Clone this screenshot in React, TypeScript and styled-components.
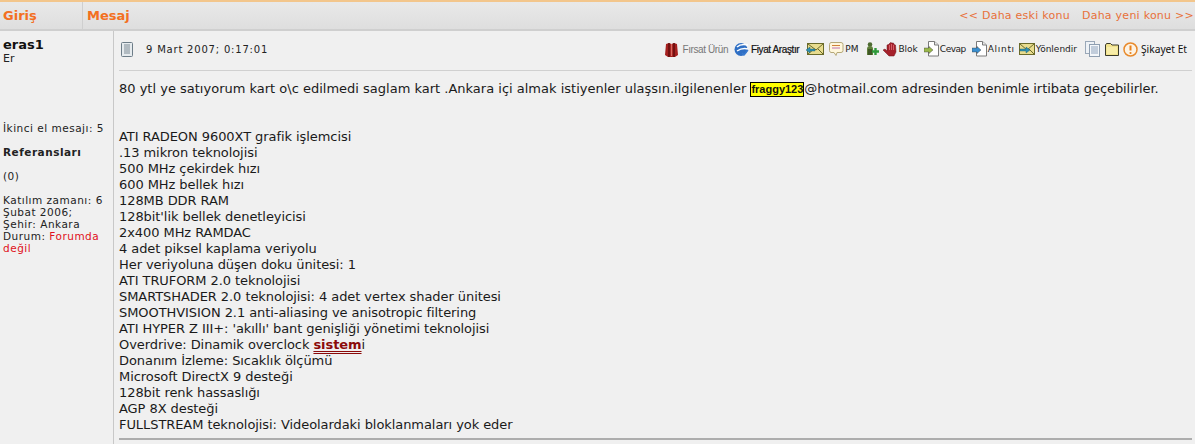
import React from 'react';
import styled, { createGlobalStyle } from 'styled-components';

const GlobalStyle = createGlobalStyle`
  html, body {
    margin: 0;
    padding: 0;
    background: #f0f0f0;
    overflow: hidden;
  }
  body {
    font-family: "DejaVu Sans", Verdana, sans-serif;
    color: #111;
  }
`;

const Page = styled.div`
  width: 1195px;
  height: 444px;
  overflow: hidden;
  background: #f0f0f0;
  border-top: 2px solid #f3c68c;
  box-sizing: border-box;
`;

const Header = styled.div`
  display: flex;
  align-items: stretch;
  height: 29px;
  background: linear-gradient(#e9e9e9, #dedede);
  border-bottom: 2px solid #cfcfcf;
  box-sizing: border-box;
`;

const HeaderCell = styled.div<{ $width?: number }>`
  width: ${(p) => (p.$width ? `${p.$width}px` : 'auto')};
  flex: ${(p) => (p.$width ? '0 0 auto' : '1')};
  box-sizing: border-box;
  display: flex;
  align-items: center;
  justify-content: ${(p) => (p.$width ? 'flex-start' : 'space-between')};
  padding: 0 1px 0 ${(p) => (p.$width ? 3 : 4)}px;
  border-right: ${(p) => (p.$width ? '1px solid #cfcfcf' : 'none')};
  font: bold 13px "DejaVu Sans", Verdana, sans-serif;
  color: #f36f21;
`;

const Pager = styled.div`
  display: flex;
  gap: 12px;
  font-size: 11px;
  font-weight: normal;
  letter-spacing: 0.25px;
  color: #e8703a;
`;

const Post = styled.div`
  display: flex;
  height: 413px;
`;

const Sidebar = styled.div`
  flex: 0 0 114px;
  box-sizing: border-box;
  padding: 7px 3px 0 3px;
  border-right: 1px solid #c8c8c8;
  font-size: 10.5px;
  line-height: 12px;
  color: #222;
  letter-spacing: 0.5px;
`;

const Name = styled.div`
  font-size: 13px;
  line-height: 14px;
  font-weight: bold;
  letter-spacing: 0;
  color: #111;
`;

const Rank = styled.div`
  font-size: 11px;
  line-height: 13px;
  letter-spacing: 0;
  margin-bottom: 57px;
`;

const SideBlock = styled.p`
  margin: 0 0 12px;
`;

const Offline = styled.span`
  color: #e01020;
`;

const Content = styled.div`
  flex: 1;
  min-width: 0;
  padding: 0 3px 0 5px;
`;

const Toolbar = styled.div`
  display: flex;
  align-items: center;
  height: 40px;
  padding: 0 5px 3px 2px;
  border-bottom: 1px solid #d0d0d0;
  box-sizing: border-box;
`;

const DateText = styled.span`
  margin-left: 13px;
  font-size: 10px;
  letter-spacing: 0.8px;
  color: #222;
`;

const Tools = styled.div`
  margin-left: auto;
  display: flex;
  align-items: center;
`;

const Tool = styled.span<{ $gap?: number }>`
  display: inline-flex;
  align-items: center;
  margin-left: ${(p) => p.$gap ?? 0}px;
  white-space: nowrap;
  svg {
    display: block;
    flex: none;
  }
`;

const ImageLabel = styled.span<{ $muted?: boolean; $gap?: number }>`
  margin-left: ${(p) => p.$gap ?? 2}px;
  font-family: "Liberation Sans", Arial, sans-serif;
  font-size: 10px;
  letter-spacing: -0.4px;
  color: ${(p) => (p.$muted ? '#777' : '#111')};
  -webkit-text-stroke: ${(p) => (p.$muted ? '0' : '0.2px')};
`;

const ToolLabel = styled.span<{ $spacing?: number }>`
  margin-left: 1px;
  font-size: 9px;
  letter-spacing: ${(p) => p.$spacing ?? 0}px;
  color: #222;
`;

const ComplaintLabel = styled.span`
  margin-left: 3px;
  font-family: "Noto Sans", sans-serif;
  font-size: 10.2px;
  color: #111;
`;

const Body = styled.div`
  padding: 10px 0 0 0;
  font-size: 13px;
  line-height: 16px;
  letter-spacing: -0.07px;
  color: #1a1a1a;
  white-space: nowrap;
`;

const Lead = styled.span`
  letter-spacing: 0;
`;

const Highlight = styled.span`
  display: inline-block;
  line-height: 13px;
  background: #ffff00;
  border: 1px solid #000;
  font-family: "Liberation Sans", Arial, sans-serif;
  font-size: 11px;
  font-weight: bold;
  letter-spacing: 0;
  color: #111;
`;

const SysLink = styled.span`
  font-weight: bold;
  color: #8b0a0a;
  text-decoration: underline double #8b0a0a;
  text-underline-offset: 2px;
`;

const Rule = styled.div`
  margin-top: 5px;
  border-top: 2px solid #adadad;
`;

const NoteIcon = () => (
  <svg width="12" height="15" viewBox="0 0 12 15">
    <rect x="0.5" y="0.5" width="11" height="14" rx="1" fill="#e6ebee" stroke="#6d7d88" />
    <path d="M3 3h6M3 5h6M3 7h6M3 9h6M3 11h6" stroke="#7c8a94" />
  </svg>
);

const GiftIcon = () => (
  <svg width="13" height="15" viewBox="0 0 13 15">
    <path d="M1 2l3-1 2.500 1L9 1l3 1 1 11-3 2H3l-3-2z" fill="#a5201f" />
    <path d="M4 1v14M9 1v14" stroke="#5e0c0c" strokeWidth="1.4" />
    <path d="M6.500 2v12" stroke="#d86a60" strokeWidth="1.2" />
  </svg>
);

const GlobeIcon = () => (
  <svg width="15" height="15" viewBox="0 0 15 15">
    <circle cx="7" cy="7.500" r="6.500" fill="#2f6fc4" />
    <path d="M3 5c3-3 7-3 11-2M3 9c3-2 7-3 11-2" stroke="#fff" strokeWidth="1.500" fill="none" />
    <path d="M8 11l2 2 4-5" stroke="#3a7bd0" strokeWidth="1.300" fill="none" />
  </svg>
);

const MailArrowIcon = () => (
  <svg width="18" height="12" viewBox="0 0 18 12">
    <rect x="1.500" y="0.500" width="16" height="11" fill="#e8dc8e" stroke="#6a6a2a" />
    <path d="M2 1l8 6 7-6M8 6l-6 5M12 6l5 5" stroke="#6a6a2a" fill="none" />
    <path d="M0 7l4-3v2h5v2H4v2z" fill="#2f8fb0" stroke="#1a5a70" strokeWidth="0.400" />
  </svg>
);

const BubbleIcon = () => (
  <svg width="15" height="14" viewBox="0 0 15 14">
    <path d="M2 .5h10a2 2 0 0 1 2 2v6a2 2 0 0 1-2 2H8l-1 3-2-3H2a2 2 0 0 1-1.500-2v-6A2 2 0 0 1 2 .5z" fill="#fff7dc" stroke="#b5a878" />
    <path d="M3 3.500h8" stroke="#d0803a" />
    <path d="M3 6h8" stroke="#c070b0" />
  </svg>
);

const UserPlusIcon = () => (
  <svg width="13" height="14" viewBox="0 0 13 14">
    <circle cx="4" cy="2.500" r="2.300" fill="#4e6b32" />
    <path d="M1 13V7a3 3 0 0 1 6 0v6z" fill="#5f7f3a" />
    <path d="M3 7v6M5 7v6" stroke="#203010" />
    <path d="M9.500 6v7M6 9.500h7" stroke="#2e9a3a" strokeWidth="2.400" />
  </svg>
);

const HandIcon = () => (
  <svg width="14" height="15" viewBox="0 0 14 15">
    <path d="M0 8l2-1 2 2V3l1.500-.5L6 2l1.500-1.500L9 1l1.500 0 .5 1.500 1.500.5.500 7-2 4H6L3 11z" fill="#a5202a" stroke="#6d1018" strokeWidth="0.500" />
    <path d="M6.500 3v5M8.500 2v6M10.500 3v5" stroke="#dd7078" strokeWidth="0.800" />
  </svg>
);

const PageArrowIcon = ({ arrow }: { arrow: string }) => (
  <svg width="15" height="16" viewBox="0 0 15 16">
    <path d="M4.500.5h6l4 3.500v11h-10z" fill="#fff" stroke="#7a7a7a" />
    <path d="M10.500.5v3.500h4" fill="#e8e8e8" stroke="#7a7a7a" />
    <path d="M9 9L5 5.500V7H0v4h5v1.500z" fill={arrow} stroke="#3a3a3a" strokeWidth="0.400" />
  </svg>
);

const MailForwardIcon = () => (
  <svg width="16" height="12" viewBox="0 0 16 12">
    <rect x="0.500" y="0.500" width="15" height="11" fill="#e8dc8e" stroke="#6a6a2a" />
    <path d="M1 1l7 6 7-6M10 6l5 5" stroke="#6a6a2a" fill="none" />
    <path d="M11 7L7 4v2H1v2h6v2z" fill="#2f8fb0" stroke="#1a5a70" strokeWidth="0.400" />
  </svg>
);

const DocsIcon = () => (
  <svg width="15" height="16" viewBox="0 0 15 16">
    <rect x="0.500" y="0.500" width="9" height="12" fill="#eef2f6" stroke="#9aa8b8" />
    <rect x="4.500" y="3.500" width="10" height="12" fill="#f4f7fa" stroke="#8e9eb0" />
    <path d="M6 6h7M6 8h7M6 10h7M6 12h7" stroke="#8fa3bc" />
  </svg>
);

const FolderIcon = () => (
  <svg width="14" height="13" viewBox="0 0 14 13">
    <path d="M.5 12.500V2l1-1.500h4L7 2h6.500v10.500z" fill="#f2e38e" stroke="#3a3a2a" />
    <path d="M2 4h10v7H2z" fill="#f8eda8" />
  </svg>
);

const AlertIcon = () => (
  <svg width="15" height="15" viewBox="0 0 15 15">
    <circle cx="7.500" cy="7.500" r="6.500" fill="#fdf3e4" stroke="#e88a2c" strokeWidth="1.500" />
    <path d="M7.500 3.500v5" stroke="#e8801c" strokeWidth="2" />
    <circle cx="7.500" cy="11" r="1.100" fill="#e8801c" />
  </svg>
);

const specs = [
  'ATI RADEON 9600XT grafik işlemcisi',
  '.13 mikron teknolojisi',
  '500 MHz çekirdek hızı',
  '600 MHz bellek hızı',
  '128MB DDR RAM',
  "128bit'lik bellek denetleyicisi",
  '2x400 MHz RAMDAC',
  '4 adet piksel kaplama veriyolu',
  'Her veriyoluna düşen doku ünitesi: 1',
  'ATI TRUFORM 2.0 teknolojisi',
  'SMARTSHADER 2.0 teknolojisi: 4 adet vertex shader ünitesi',
  'SMOOTHVISION 2.1 anti-aliasing ve anisotropic filtering',
  "ATI HYPER Z III+: 'akıllı' bant genişliği yönetimi teknolojisi",
];

const specsAfter = [
  'Donanım İzleme: Sıcaklık ölçümü',
  'Microsoft DirectX 9 desteği',
  '128bit renk hassaslığı',
  'AGP 8X desteği',
  'FULLSTREAM teknolojisi: Videolardaki bloklanmaları yok eder',
];

export default function App() {
  return (
    <Page>
      <GlobalStyle />
      <Header>
        <HeaderCell $width={83}>Giriş</HeaderCell>
        <HeaderCell>
          Mesaj
          <Pager>
            <span>&lt;&lt; Daha eski konu</span>
            <span>Daha yeni konu &gt;&gt;</span>
          </Pager>
        </HeaderCell>
      </Header>
      <Post>
        <Sidebar>
          <Name>eras1</Name>
          <Rank>Er</Rank>
          <SideBlock>İkinci el mesajı: 5</SideBlock>
          <SideBlock>
            <b>Referansları</b>
          </SideBlock>
          <SideBlock>(0)</SideBlock>
          <SideBlock>
            Katılım zamanı: 6 Şubat 2006;
            <br />
            Şehir: Ankara
            <br />
            Durum: <Offline>Forumda değil</Offline>
          </SideBlock>
        </Sidebar>
        <Content>
          <Toolbar>
            <NoteIcon />
            <DateText>9 Mart 2007; 0:17:01</DateText>
            <Tools>
              <Tool><GiftIcon /><ImageLabel $muted $gap={4}>Fırsat Ürün</ImageLabel></Tool>
              <Tool $gap={6}><GlobeIcon /><ImageLabel>Fiyat Araştır</ImageLabel></Tool>
              <Tool $gap={7}><MailArrowIcon /></Tool>
              <Tool $gap={5}><BubbleIcon /><ToolLabel>PM</ToolLabel></Tool>
              <Tool $gap={8}><UserPlusIcon /></Tool>
              <Tool $gap={4}><HandIcon /><ToolLabel>Blok</ToolLabel></Tool>
              <Tool $gap={6}><PageArrowIcon arrow="#9ab84a" /><ToolLabel $spacing={-0.5}>Cevap</ToolLabel></Tool>
              <Tool $gap={6}><PageArrowIcon arrow="#3a8fd0" /><ToolLabel $spacing={0.7}>Alıntı</ToolLabel></Tool>
              <Tool $gap={4}><MailForwardIcon /><ToolLabel>Yönlendir</ToolLabel></Tool>
              <Tool $gap={8}><DocsIcon /></Tool>
              <Tool $gap={5}><FolderIcon /></Tool>
              <Tool $gap={4}><AlertIcon /></Tool>
              <Tool><ComplaintLabel>Şikayet Et</ComplaintLabel></Tool>
            </Tools>
          </Toolbar>
          <Body>
            <Lead>80 ytl ye satıyorum kart o\c edilmedi saglam kart .Ankara içi almak istiyenler ulaşsın.ilgilenenler{' '}</Lead>
            <Highlight>fraggy123</Highlight>@hotmail.com adresinden benimle irtibata geçebilirler.
            <br />
            <br />
            <br />
            {specs.map((line) => (
              <div key={line}>{line}</div>
            ))}
            <div>
              Overdrive: Dinamik overclock <SysLink>sistem</SysLink>i
            </div>
            {specsAfter.map((line) => (
              <div key={line}>{line}</div>
            ))}
            <Rule />
          </Body>
        </Content>
      </Post>
    </Page>
  );
}
